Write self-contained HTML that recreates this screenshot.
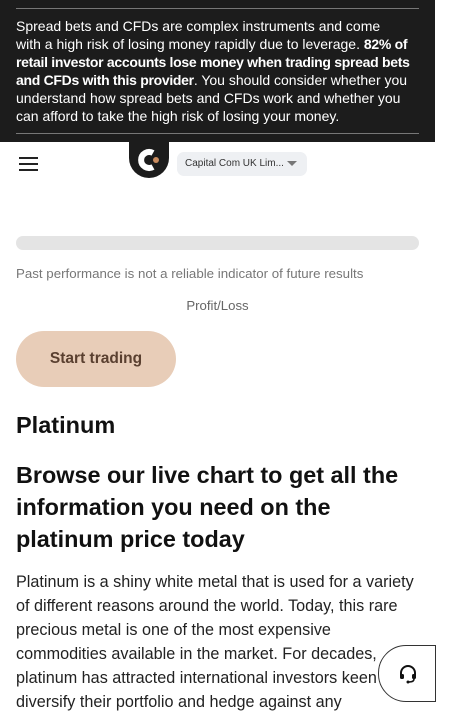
<!DOCTYPE html>
<html><head><meta charset="utf-8">
<style>
*{margin:0;padding:0;box-sizing:border-box}
body{width:450px;height:717px;overflow:hidden;background:#fff;font-family:"Liberation Sans",sans-serif;color:#111;position:relative}
.banner{position:absolute;left:0;top:0;width:435px;height:142px;background:#1c1c1c;color:#fff}
.banner .l1{position:absolute;left:16px;top:8px;width:403px;height:1px;background:#777}
.banner .l2{position:absolute;left:16px;top:133px;width:403px;height:1px;background:#777}
.banner p{position:absolute;left:16px;top:17px;font-size:14px;line-height:18px;white-space:nowrap}
.banner b{letter-spacing:-0.3px}
.ham{position:absolute;left:19px;top:157px;width:19px}
.ham i{display:block;height:2px;background:#222;margin-bottom:4px}
.logo{position:absolute;left:129px;top:142px;width:40px;height:36px;background:#1c1c1c;border-radius:0 0 20px 20px}
.sel{position:absolute;left:177px;top:152px;width:130px;height:24px;background:#eef0f3;border-radius:7px;font-size:10px;color:#333;padding:6px 0 0 8px}
.sel:after{content:"";position:absolute;right:10px;top:9px;border-left:5px solid transparent;border-right:5px solid transparent;border-top:5px solid #777}
.bar{position:absolute;left:16px;top:236px;width:403px;height:14px;background:#e4e4e4;border-radius:7px}
.past{position:absolute;left:16px;top:266px;font-size:13.3px;color:#777;white-space:nowrap}
.pl{position:absolute;left:0;width:435px;top:298px;text-align:center;font-size:13.2px;color:#666}
.btn{position:absolute;left:16px;top:331px;width:160px;height:56px;background:#e8cdb8;border-radius:28px;color:#5a4030;font-weight:bold;font-size:15.5px;text-align:center;line-height:56px}
h1{position:absolute;left:16px;top:412px;font-size:23.5px;font-weight:bold}
h2{position:absolute;left:16px;top:459px;font-size:23.4px;line-height:32px;font-weight:bold;white-space:nowrap}
.txt{position:absolute;left:16px;top:570px;font-size:16.2px;line-height:24px;color:#222;white-space:nowrap}
.sup{position:absolute;left:378px;top:645px;width:58px;height:57px;background:#fff;border:1px solid #333;border-radius:28px 0 0 28px}
</style></head><body>
<div class="banner"><div class="l1"></div><div class="l2"></div>
<p>Spread bets and CFDs are complex instruments and come<br>with a high risk of losing money rapidly due to leverage. <b>82% of<br>retail investor accounts lose money when trading spread bets<br>and CFDs with this provider</b>. You should consider whether you<br>understand how spread bets and CFDs work and whether you<br>can afford to take the high risk of losing your money.</p></div>
<div class="ham"><i></i><i></i><i></i></div>
<div class="logo"><svg width="40" height="36" viewBox="0 0 40 36"><path d="M24 11 A8 8 0 1 0 24 25" stroke="#fff" stroke-width="6" fill="none"/><circle cx="27" cy="18" r="3" fill="#c98b5e"/></svg></div>
<div class="sel">Capital Com UK Lim...</div>
<div class="bar"></div>
<div class="past">Past performance is not a reliable indicator of future results</div>
<div class="pl">Profit/Loss</div>
<div class="btn">Start trading</div>
<h1>Platinum</h1>
<h2>Browse our live chart to get all the<br>information you need on the<br>platinum price today</h2>
<div class="txt">Platinum is a shiny white metal that is used for a variety<br>of different reasons around the world. Today, this rare<br>precious metal is one of the most expensive<br>commodities available in the market. For decades,<br>platinum has attracted international investors keen to<br>diversify their portfolio and hedge against any</div>
<div class="sup"><svg style="position:absolute;left:19px;top:18px" width="20" height="20" viewBox="0 0 20 20"><path d="M3 12V9a7 7 0 0 1 14 0v3" stroke="#111" stroke-width="2" fill="none"/><rect x="2" y="10" width="4" height="5" rx="1.5" fill="#111"/><rect x="14" y="10" width="4" height="5" rx="1.5" fill="#111"/><path d="M16 15q0 3-5 3" stroke="#111" stroke-width="1.6" fill="none"/><circle cx="10" cy="18" r="1.5" fill="#111"/></svg></div>
</body></html>
